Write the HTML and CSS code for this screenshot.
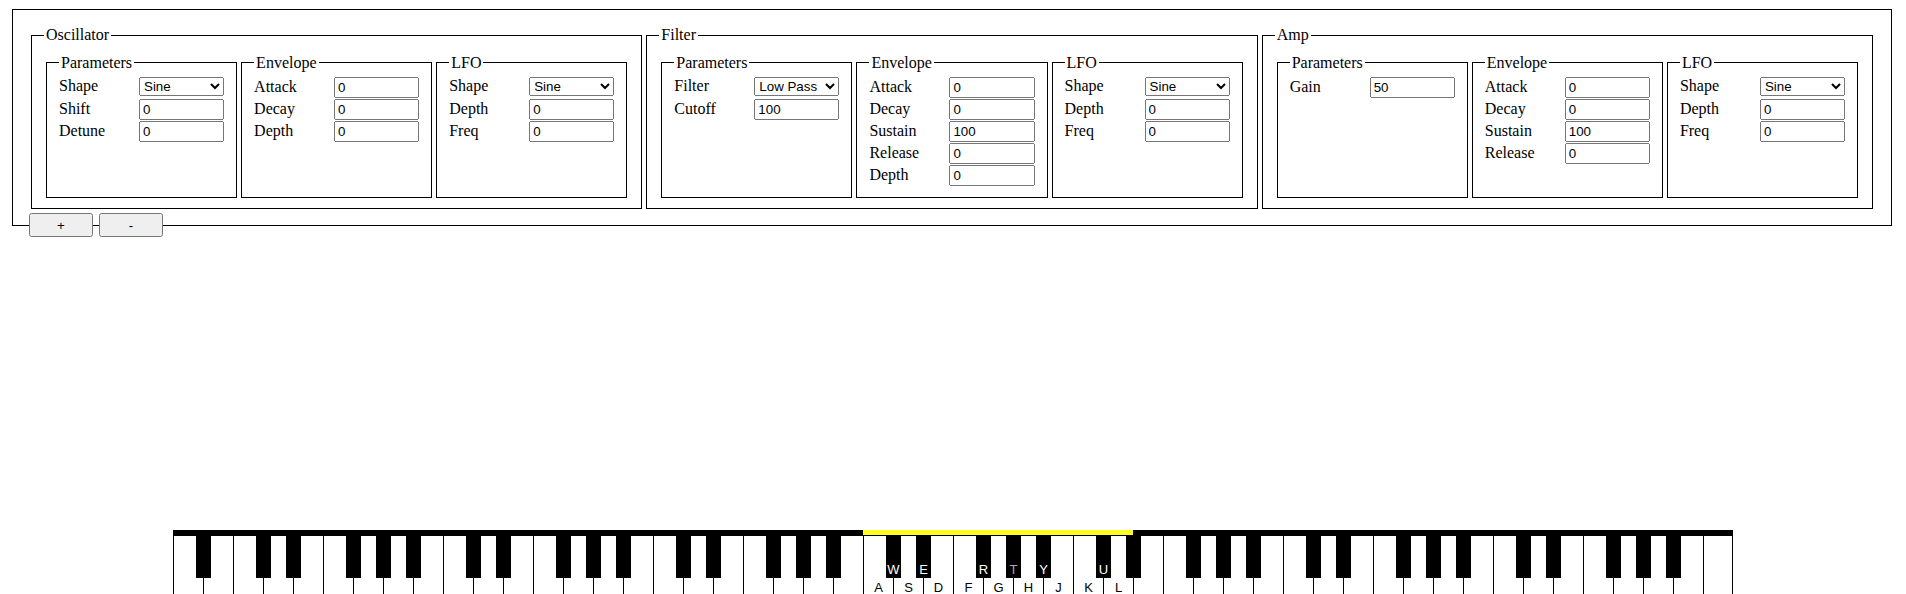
FILE: index.html
```html
<!DOCTYPE html>
<html lang="en">
<head>
    <meta charset="UTF-8">
    <meta name="viewport" content="width=device-width, initial-scale=1.0">
    <title>Synth</title>
    <link rel="stylesheet" href="styles.css">
</head>
<body>
    <div class="synth">
        <div class="modules">
            <fieldset class="module">
                <legend>Oscillator</legend>
                <div class="groups">
                    <fieldset class="group">
                        <legend>Parameters</legend>
                        <div class="row"><label>Shape</label><select><option>Sine</option><option>Square</option><option>Sawtooth</option><option>Triangle</option></select></div>
                        <div class="row"><label>Shift</label><input type="text" value="0"></div>
                        <div class="row"><label>Detune</label><input type="text" value="0"></div>
                    </fieldset>
                    <fieldset class="group">
                        <legend>Envelope</legend>
                        <div class="row"><label>Attack</label><input type="text" value="0"></div>
                        <div class="row"><label>Decay</label><input type="text" value="0"></div>
                        <div class="row"><label>Depth</label><input type="text" value="0"></div>
                    </fieldset>
                    <fieldset class="group">
                        <legend>LFO</legend>
                        <div class="row"><label>Shape</label><select><option>Sine</option><option>Square</option><option>Sawtooth</option><option>Triangle</option></select></div>
                        <div class="row"><label>Depth</label><input type="text" value="0"></div>
                        <div class="row"><label>Freq</label><input type="text" value="0"></div>
                    </fieldset>
                </div>
            </fieldset>
            <fieldset class="module">
                <legend>Filter</legend>
                <div class="groups">
                    <fieldset class="group">
                        <legend>Parameters</legend>
                        <div class="row"><label>Filter</label><select><option>Low Pass</option><option>High Pass</option><option>Band Pass</option></select></div>
                        <div class="row"><label>Cutoff</label><input type="text" value="100"></div>
                    </fieldset>
                    <fieldset class="group">
                        <legend>Envelope</legend>
                        <div class="row"><label>Attack</label><input type="text" value="0"></div>
                        <div class="row"><label>Decay</label><input type="text" value="0"></div>
                        <div class="row"><label>Sustain</label><input type="text" value="100"></div>
                        <div class="row"><label>Release</label><input type="text" value="0"></div>
                        <div class="row"><label>Depth</label><input type="text" value="0"></div>
                    </fieldset>
                    <fieldset class="group">
                        <legend>LFO</legend>
                        <div class="row"><label>Shape</label><select><option>Sine</option><option>Square</option><option>Sawtooth</option><option>Triangle</option></select></div>
                        <div class="row"><label>Depth</label><input type="text" value="0"></div>
                        <div class="row"><label>Freq</label><input type="text" value="0"></div>
                    </fieldset>
                </div>
            </fieldset>
            <fieldset class="module">
                <legend>Amp</legend>
                <div class="groups">
                    <fieldset class="group">
                        <legend>Parameters</legend>
                        <div class="row"><label>Gain</label><input type="text" value="50"></div>
                    </fieldset>
                    <fieldset class="group">
                        <legend>Envelope</legend>
                        <div class="row"><label>Attack</label><input type="text" value="0"></div>
                        <div class="row"><label>Decay</label><input type="text" value="0"></div>
                        <div class="row"><label>Sustain</label><input type="text" value="100"></div>
                        <div class="row"><label>Release</label><input type="text" value="0"></div>
                    </fieldset>
                    <fieldset class="group">
                        <legend>LFO</legend>
                        <div class="row"><label>Shape</label><select><option>Sine</option><option>Square</option><option>Sawtooth</option><option>Triangle</option></select></div>
                        <div class="row"><label>Depth</label><input type="text" value="0"></div>
                        <div class="row"><label>Freq</label><input type="text" value="0"></div>
                    </fieldset>
                </div>
            </fieldset>
        </div>
        <div class="voice-buttons">
            <button id="addVoice">+</button>
            <button id="removeVoice">-</button>
        </div>
    </div>

    <div id="keyboard" class="keyboard"></div>

    <script>
        // 88 keys: A0 .. C8, computer keys mapped from middle C
        const whiteLabels = {23: 'A', 24: 'S', 25: 'D', 26: 'F', 27: 'G', 28: 'H', 29: 'J', 30: 'K', 31: 'L'};
        const blackLabels = {23: 'W', 24: 'E', 26: 'R', 27: 'T', 28: 'Y', 30: 'U'};
        const keyboard = document.getElementById('keyboard');

        for (let i = 0; i < 52; i++) {
            let key = document.createElement('div');
            key.className = 'white-key';
            if (i >= 23 && i <= 31) key.classList.add('mapped');
            key.textContent = whiteLabels[i] || '';
            if (i < 51 && [0, 2, 3, 5, 6].includes(i % 7)) {
                let black = document.createElement('div');
                black.className = 'black-key';
                if (i === 27) black.classList.add('held');
                black.textContent = blackLabels[i] || '';
                key.appendChild(black);
            }
            keyboard.appendChild(key);
        }
    </script>
</body>
</html>
```

FILE: styles.css
```css
body {
    margin: 8px;
    font-family: "Liberation Serif", "Times New Roman", serif;
    font-size: 16px;
    color: #000;
    background: #fff;
}
.synth {
    border: 1px solid #000;
    margin: 1px 6px 0 4px;
    padding: 16px 16px 0;
    height: 217px;
    box-sizing: border-box;
}
.modules {
    display: flex;
}
fieldset {
    border: 1px solid #000;
    margin: 0 2px;
    padding: 0.35em 0.75em 0.625em;
    min-width: 0;
}
legend {
    padding: 0 2px;
}
.module {
    flex: 1;
    display: flex;
    flex-direction: column;
}
.groups {
    flex: 1;
    display: flex;
}
.group {
    flex: 1;
    margin-top: 4px;
}
.row {
    display: flex;
    align-items: baseline;
    height: 22px;
}
.row label {
    width: 80px;
    flex: none;
}
.row input, .row select {
    flex: 1;
    width: 0;
    min-width: 0;
    margin: 0;
    font: 13.333px "Liberation Sans", Arial, sans-serif;
}
.voice-buttons {
    display: flex;
    gap: 6px;
    margin-top: 4px;
}
.voice-buttons button {
    width: 64px;
    height: 24px;
    margin: 0;
    font: 13.333px "Liberation Sans", Arial, sans-serif;
}
.keyboard {
    display: flex;
    width: 1560px;
    margin: 304px auto 0;
}
.white-key {
    position: relative;
    width: 30px;
    height: 66px;
    box-sizing: border-box;
    border-left: 1px solid #000;
    border-top: 5px solid #000;
    box-shadow: inset 0 1px #000;
    background: #fff;
    display: flex;
    align-items: flex-end;
    justify-content: center;
    padding-bottom: 1px;
    font: 13px "Liberation Sans", Arial, sans-serif;
    line-height: 15px;
}
.white-key:last-child {
    border-right: 1px solid #000;
}
.white-key.mapped::before {
    content: '';
    position: absolute;
    top: -5px;
    left: -1px;
    right: 0;
    height: 5px;
    background: #ffff22;
}
.black-key {
    position: absolute;
    z-index: 1;
    top: 0;
    right: -8px;
    width: 15px;
    height: 43px;
    box-sizing: border-box;
    padding-bottom: 1px;
    background: #000;
    color: #fff;
    display: flex;
    align-items: flex-end;
    justify-content: center;
    line-height: 15px;
}
.black-key.held {
    color: #aaa;
}
```
